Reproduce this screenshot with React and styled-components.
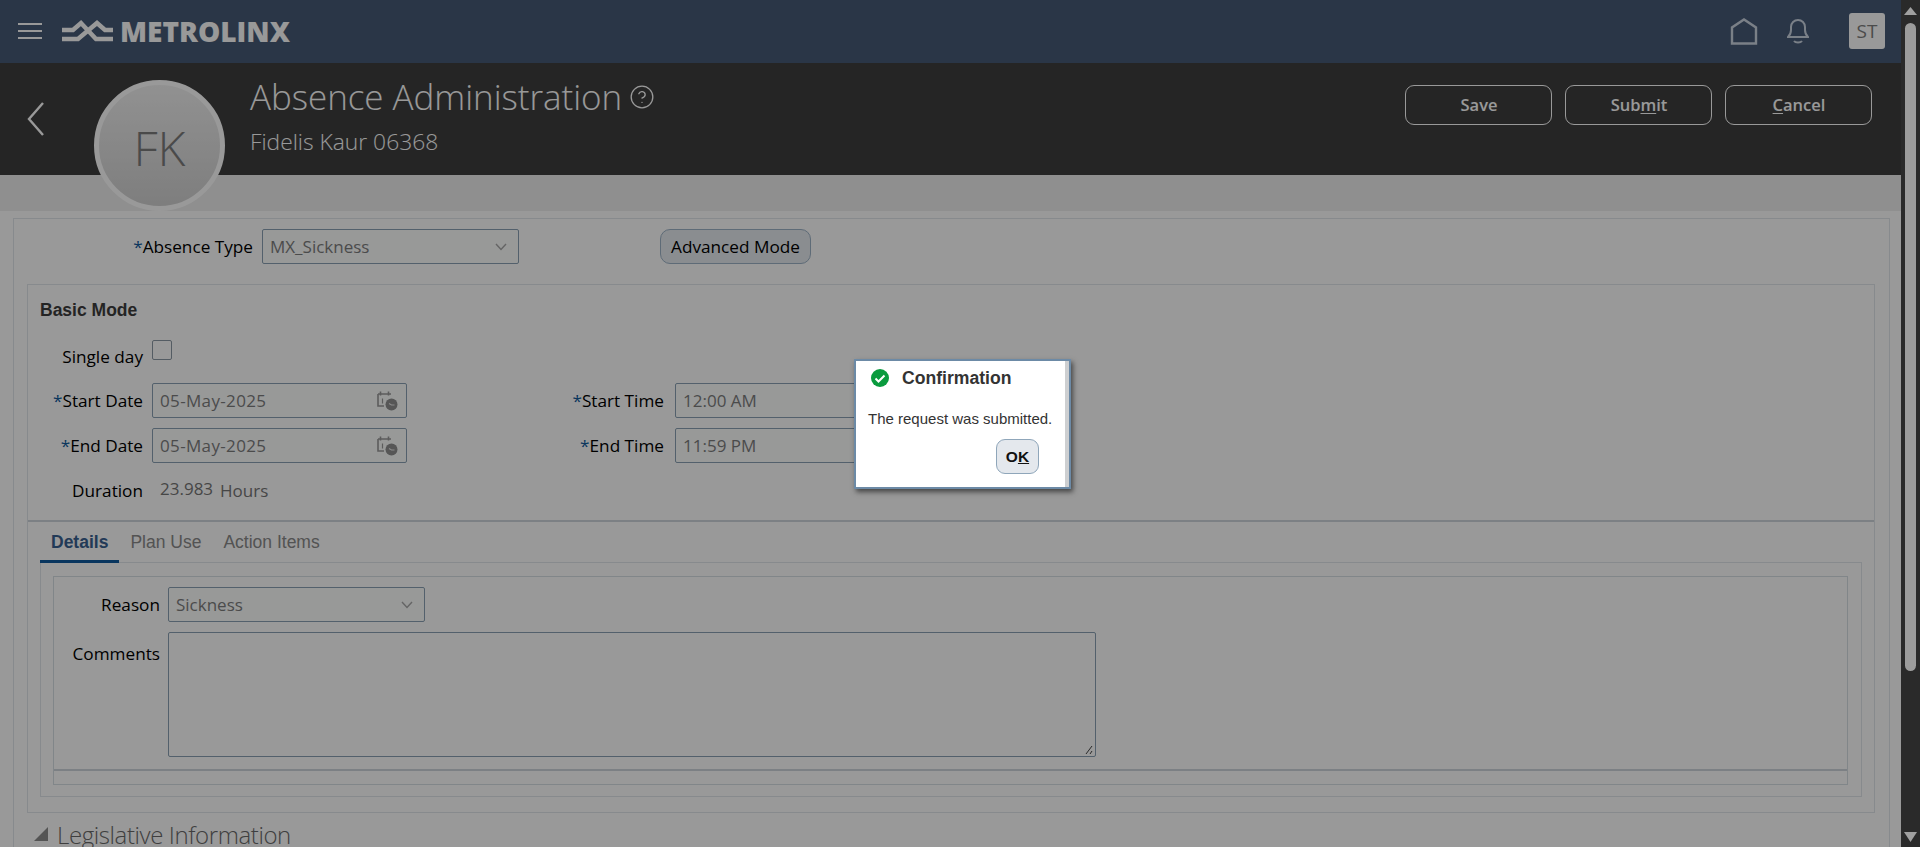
import React from 'react';
import styled, { createGlobalStyle } from 'styled-components';
import { CircleHelp } from 'lucide-react';

const UI = '"Open Sans", "Noto Sans", sans-serif';
const ARIAL = '"Liberation Sans", Arial, sans-serif';

const Global = createGlobalStyle`
  html, body { margin: 0; padding: 0; height: 100%; overflow: hidden; background: #fff; }
  * { box-sizing: border-box; }
`;

const Shell = styled.div`
  display: flex;
  width: 1920px;
  height: 847px;
  overflow: hidden;
  font-family: ${UI};
`;
const Main = styled.div`
  position: relative;
  flex: 1;
  min-width: 0;
  height: 847px;
  overflow: hidden;
  background: #fff;
`;
const Overlay = styled.div`
  position: absolute;
  inset: 0;
  background: rgba(0, 0, 0, 0.4);
`;

const NavBar = styled.header`
  display: flex;
  align-items: center;
  height: 63px;
  padding: 0 16px 1px 18px;
  background: #465a77;
  color: #fff;
`;
const NavIcon = styled.svg`
  flex: none;
  margin-left: ${p => p.$left || 0}px;
`;
const Wordmark = styled.span`
  margin-left: 6px;
  font: 800 28px/1 ${UI};
  letter-spacing: 0;
  color: #fff;
`;
const NavSpacer = styled.div`
  flex: 1;
`;
const UserTile = styled.div`
  display: flex;
  align-items: center;
  justify-content: center;
  width: 36px;
  height: 36px;
  margin-left: 40px;
  border-radius: 3px;
  background: #fff;
  color: #7d7d7d;
  font: 400 19px/1 ${UI};
`;

const PageHeader = styled.section`
  display: flex;
  align-items: flex-start;
  height: 112px;
  background: #3f3f3f;
  color: #fff;
`;
const BackArrow = styled.svg`
  flex: none;
  margin: 38px 0 0 26px;
  width: 20px;
  height: 36px;
`;
const Avatar = styled.div`
  position: absolute;
  left: 94px;
  top: 80px;
  display: flex;
  align-items: center;
  justify-content: center;
  width: 131px;
  height: 131px;
  padding-top: 4px;
  border-radius: 50%;
  border: 5px solid #fff;
  background: linear-gradient(#f2f2f2, #d2d2d2);
  color: #7c7c7c;
  font: 300 48px/1 ${UI};
`;
const TitleBlock = styled.div`
  display: flex;
  flex-direction: column;
  margin: 10px 0 0 204px;
`;
const TitleRow = styled.div`
  display: flex;
  align-items: center;
  gap: 7px;
  color: #fff;
`;
const Title = styled.h1`
  margin: 0;
  font: 300 35px/48px ${UI};
  letter-spacing: -0.05px;
  color: #fff;
  white-space: nowrap;
`;
const Subtitle = styled.div`
  margin-top: 6px;
  font: 300 22.8px/30px ${UI};
  color: #fff;
  white-space: nowrap;
`;
const HeaderActions = styled.div`
  display: flex;
  gap: 13px;
  margin: 22px 29px 0 auto;
`;
const HeaderButton = styled.button`
  width: 147px;
  height: 40px;
  padding: 0 0 0 1px;
  border: 1px solid #fff;
  border-radius: 9px;
  background: transparent;
  color: #fff;
  font: 600 16.5px/1 ${UI};
  u { text-underline-offset: 2px; }
`;

const Band = styled.div`
  height: 36px;
  background: #eeeeee;
`;

const OuterPanel = styled.main`
  margin: 7px 11px 0 13px;
  padding: 10px 0 0;
  border: 1px solid #e2e7ec;
  border-bottom: 0;
`;
const Row = styled.div`
  display: flex;
  align-items: ${p => p.$align || 'center'};
  gap: 9px;
  margin-top: ${p => p.$top || 0}px;
`;
const Label = styled.label`
  flex: none;
  width: ${p => p.$width}px;
  margin-right: ${p => p.$extra || 0}px;
  text-align: right;
  font: 500 17.2px/22px ${UI};
  color: #000;
  white-space: nowrap;
  padding-top: ${p => p.$pad || 0}px;
`;
const Star = styled.span`
  color: #0f5a9c;
`;
const FieldBox = styled.div`
  flex: none;
  display: flex;
  align-items: center;
  justify-content: space-between;
  width: ${p => p.$width || 255}px;
  height: 35px;
  padding: 0 9px 0 7px;
  border: 1px solid #8aa1b4;
  border-radius: 2px;
  background: #fdfffe;
  color: #7e7e7e;
  font: 400 17px/1 ${UI};
  letter-spacing: ${p => p.$spacing || 0}px;
`;
const SelectMark = styled.svg`
  flex: none;
  margin-right: 2px;
`;
const DateMark = styled.svg`
  flex: none;
  margin-right: -1px;
`;
const AdvancedButton = styled.button`
  flex: none;
  width: 151px;
  height: 35px;
  margin-left: 132px;
  padding: 0;
  border: 1px solid #9db3c7;
  border-radius: 10px;
  background: #e6ebf0;
  color: #000;
  font: 500 17.2px/1 ${UI};
`;

const BasicPanel = styled.section`
  margin: 20px 14px 0 13px;
  border: 1px solid #e2e7ec;
  height: 529px;
`;
const SectionTitle = styled.h2`
  margin: 0;
  padding: 16px 0 1px 12px;
  font: 700 17.5px/18px ${ARIAL};
  color: #3d3d3d;
`;
const Checkbox = styled.span`
  flex: none;
  display: block;
  width: 20px;
  height: 20px;
  margin-top: -14px;
  border: 1px solid #8d9aa6;
  border-radius: 2px;
  background: #fff;
`;
const ValueText = styled.span`
  font: 400 17px/22px ${UI};
  color: #767676;
  margin-left: ${p => (p.$lift ? 8 : -2)}px;
  margin-top: ${p => (p.$lift ? -4 : 0)}px;
`;
const Divider = styled.div`
  height: 2px;
  margin-top: ${p => p.$top}px;
  background: #cfd6dc;
`;
const TabStrip = styled.nav`
  display: flex;
  padding-left: 12px;
  height: 41px;
`;
const Tab = styled.div`
  height: 41px;
  padding: 10px 11px 0;
  border-bottom: 3px solid ${p => (p.$active ? '#0f5a9e' : 'transparent')};
  font: ${p => (p.$active ? 700 : 400)} 17.5px/20px ${ARIAL};
  color: ${p => (p.$active ? '#3a6291' : '#8a8a8a')};
  white-space: nowrap;
`;
const TabPanel = styled.div`
  margin: -1px 12px 0 12px;
  padding: 13px 13px 12px 12px;
  height: 235px;
  border: 1px solid #e2e7ec;
`;
const InnerPanel = styled.div`
  height: 209px;
  padding-top: 10px;
  border: 1px solid #d8dfe5;
`;
const CommentBox = styled.div`
  position: relative;
  flex: none;
  width: 928px;
  height: 125px;
  border: 1px solid #8aa1b4;
  border-radius: 2px;
  background: #fff;
`;
const Grip = styled.svg`
  position: absolute;
  right: 1px;
  bottom: 1px;
  width: 10px;
  height: 10px;
`;
const Disclosure = styled.div`
  display: flex;
  align-items: flex-start;
  gap: 9px;
  padding: 5px 0 0 20px;
`;
const DisclosureMark = styled.svg`
  flex: none;
  width: 14px;
  height: 14px;
  margin-top: 9px;
`;
const DisclosureText = styled.span`
  font: 300 24px/34px ${UI};
  letter-spacing: -0.4px;
  color: #6a6a6a;
  white-space: nowrap;
`;

const Dialog = styled.div`
  position: absolute;
  left: 854px;
  top: 359px;
  width: 217px;
  height: 130px;
  border: 2px solid #6c8aa6;
  background: #fff;
  box-shadow: 2px 3px 5px rgba(0, 0, 0, 0.55);
`;
const DialogInner = styled.div`
  height: 100%;
  padding: 0 0 0 12px;
  border-right: 4px solid #cdcfd1;
  display: flex;
  flex-direction: column;
`;
const DialogHead = styled.div`
  display: flex;
  align-items: center;
  gap: 13px;
  padding: 2px 0 0 3px;
  height: 31px;
`;
const DialogTitle = styled.div`
  font: 700 17.6px/20px ${ARIAL};
  color: #333;
`;
const DialogText = styled.p`
  margin: 18px 0 0;
  font: 400 15px/18px ${ARIAL};
  color: #333;
  white-space: nowrap;
`;
const OkButton = styled.button`
  align-self: flex-end;
  width: 43px;
  height: 35px;
  margin: 11px 26px 0 0;
  padding: 0;
  border: 1px solid #8fa6ba;
  border-radius: 9px;
  background: #e4e8ed;
  color: #111;
  font: 700 15.5px/1 ${ARIAL};
`;

const Scrollbar = styled.aside`
  flex: none;
  display: flex;
  flex-direction: column;
  align-items: center;
  width: 19px;
  height: 847px;
  padding: 7px 0 5px;
  background: #2a2a2a;
`;
const ScrollThumb = styled.div`
  width: 11px;
  height: 648px;
  margin-top: 8px;
  border-radius: 6px;
  background: #9c9c9c;
`;
const ScrollGap = styled.div`
  flex: 1;
`;

const Chevron = () => (
  <SelectMark width="12" height="8" viewBox="0 0 12 8" fill="none" stroke="#a8a8a8" strokeWidth="1.4">
    <path d="M1 1l5 5.5L11 1" />
  </SelectMark>
);
const CalendarClock = () => (
  <DateMark width="21" height="21" viewBox="0 0 21 21" fill="none">
    <path d="M1 4h13M1 4v12h6M3.500 1.500v4M11.500 1.500v4" stroke="#9a9a9a" strokeWidth="1.6" />
    <path d="M5.500 8.500v5" stroke="#9a9a9a" strokeWidth="1.200" />
    <circle cx="14.500" cy="14.500" r="6" fill="#8f8f8f" />
    <path d="M12 13.500l2.500 1.500h3" stroke="#e8e8e8" strokeWidth="1.100" />
  </DateMark>
);

function Field({ value, icon, width }) {
  return (
    <FieldBox $width={width} $spacing={icon === 'date' ? 0.35 : 0}>
      <span>{value}</span>
      {icon === 'date' ? <CalendarClock /> : icon === 'select' ? <Chevron /> : null}
    </FieldBox>
  );
}

export default function App() {
  return (
    <Shell>
      <Global />
      <Main>
        <NavBar>
          <NavIcon width="24" height="18" viewBox="0 0 24 18" stroke="#fff" strokeWidth="2">
            <path d="M0 2h24M0 9h24M0 16h24" />
          </NavIcon>
          <NavIcon $left={20} width="52" height="24" viewBox="62 19 52 24" fill="none" stroke="#fff" strokeWidth="4.500">
            <path d="M62 30h11l8-7 15 16h17" />
            <path d="M62 39h16l19-16 8 7h8" />
          </NavIcon>
          <Wordmark>METROLINX</Wordmark>
          <NavSpacer />
          <NavIcon width="28" height="27" viewBox="0 0 28 27" fill="none" stroke="#ccd5e2" strokeWidth="2.400">
            <path d="M2 25.500V9.500L14 1.500l12 8v16z" />
          </NavIcon>
          <NavIcon $left={29} width="22" height="26" viewBox="0 0 22 26" fill="none" stroke="#ccd5e2" strokeWidth="2">
            <path d="M1 19h20c-2-2-3-3-3-7V9a7 7 0 0 0-14 0v3c0 4-1 5-3 7z" />
            <path d="M7 23c1.500 2 6.500 2 8 0" />
          </NavIcon>
          <UserTile>ST</UserTile>
        </NavBar>

        <PageHeader>
          <BackArrow viewBox="0 0 20 36" fill="none" stroke="#fff" strokeWidth="2.400">
            <path d="M17 2L3 18l14 16" />
          </BackArrow>
          <TitleBlock>
            <TitleRow>
              <Title>Absence Administration</Title>
              <CircleHelp size={26} strokeWidth={1.2} />
            </TitleRow>
            <Subtitle>Fidelis Kaur 06368</Subtitle>
          </TitleBlock>
          <HeaderActions>
            <HeaderButton>Save</HeaderButton>
            <HeaderButton>Sub<u>m</u>it</HeaderButton>
            <HeaderButton><u>C</u>ancel</HeaderButton>
          </HeaderActions>
        </PageHeader>
        <Avatar>FK</Avatar>
        <Band />

        <OuterPanel>
          <Row>
            <Label $width={239}><Star>*</Star>Absence Type</Label>
            <Field value="MX_Sickness" icon="select" width={257} />
            <AdvancedButton>Advanced Mode</AdvancedButton>
          </Row>

          <BasicPanel>
            <SectionTitle>Basic Mode</SectionTitle>
            <Row $top={26}>
              <Label $width={115}>Single day</Label>
              <Checkbox />
            </Row>
            <Row $top={15}>
              <Label $width={115}><Star>*</Star>Start Date</Label>
              <Field value="05-May-2025" icon="date" />
              <Label $width={248} $extra={2}><Star>*</Star>Start Time</Label>
              <Field value="12:00 AM" />
            </Row>
            <Row $top={10}>
              <Label $width={115}><Star>*</Star>End Date</Label>
              <Field value="05-May-2025" icon="date" />
              <Label $width={248} $extra={2}><Star>*</Star>End Time</Label>
              <Field value="11:59 PM" />
            </Row>
            <Row $top={17}>
              <Label $width={115}>Duration</Label>
              <ValueText $lift>23.983</ValueText>
              <ValueText>Hours</ValueText>
            </Row>
            <Divider $top={18} />
            <TabStrip>
              <Tab $active>Details</Tab>
              <Tab>Plan Use</Tab>
              <Tab>Action Items</Tab>
            </TabStrip>
            <TabPanel>
              <InnerPanel>
                <Row>
                  <Label $width={106} $extra={-1}>Reason</Label>
                  <Field value="Sickness" icon="select" width={257} />
                </Row>
                <Row $top={10} $align="flex-start">
                  <Label $width={106} $extra={-1} $pad={11}>Comments</Label>
                  <CommentBox>
                    <Grip viewBox="0 0 10 10" stroke="#444" strokeWidth="1">
                      <path d="M2 9L8 1M6 9l2-3" />
                    </Grip>
                  </CommentBox>
                </Row>
                <Divider $top={12} />
              </InnerPanel>
            </TabPanel>
          </BasicPanel>

          <Disclosure>
            <DisclosureMark viewBox="0 0 14 14">
              <path d="M14 0v14H0z" fill="#8d8d8d" />
            </DisclosureMark>
            <DisclosureText>Legislative Information</DisclosureText>
          </Disclosure>
        </OuterPanel>

        <Overlay />
        <Dialog>
          <DialogInner>
            <DialogHead>
              <svg width="18" height="18" viewBox="0 0 18 18">
                <circle cx="9" cy="9" r="9" fill="#0a9b3e" />
                <path d="M4.500 9.500l3 3 6-6" fill="none" stroke="#fff" strokeWidth="2" />
              </svg>
              <DialogTitle>Confirmation</DialogTitle>
            </DialogHead>
            <DialogText>The request was submitted.</DialogText>
            <OkButton>O<u>K</u></OkButton>
          </DialogInner>
        </Dialog>
      </Main>

      <Scrollbar>
        <svg width="13" height="8" viewBox="0 0 13 8"><path d="M6.500 0L13 8H0z" fill="#a0a0a0" /></svg>
        <ScrollThumb />
        <ScrollGap />
        <svg width="13" height="10" viewBox="0 0 13 10"><path d="M0 0h13L6.500 10z" fill="#a0a0a0" /></svg>
      </Scrollbar>
    </Shell>
  );
}
